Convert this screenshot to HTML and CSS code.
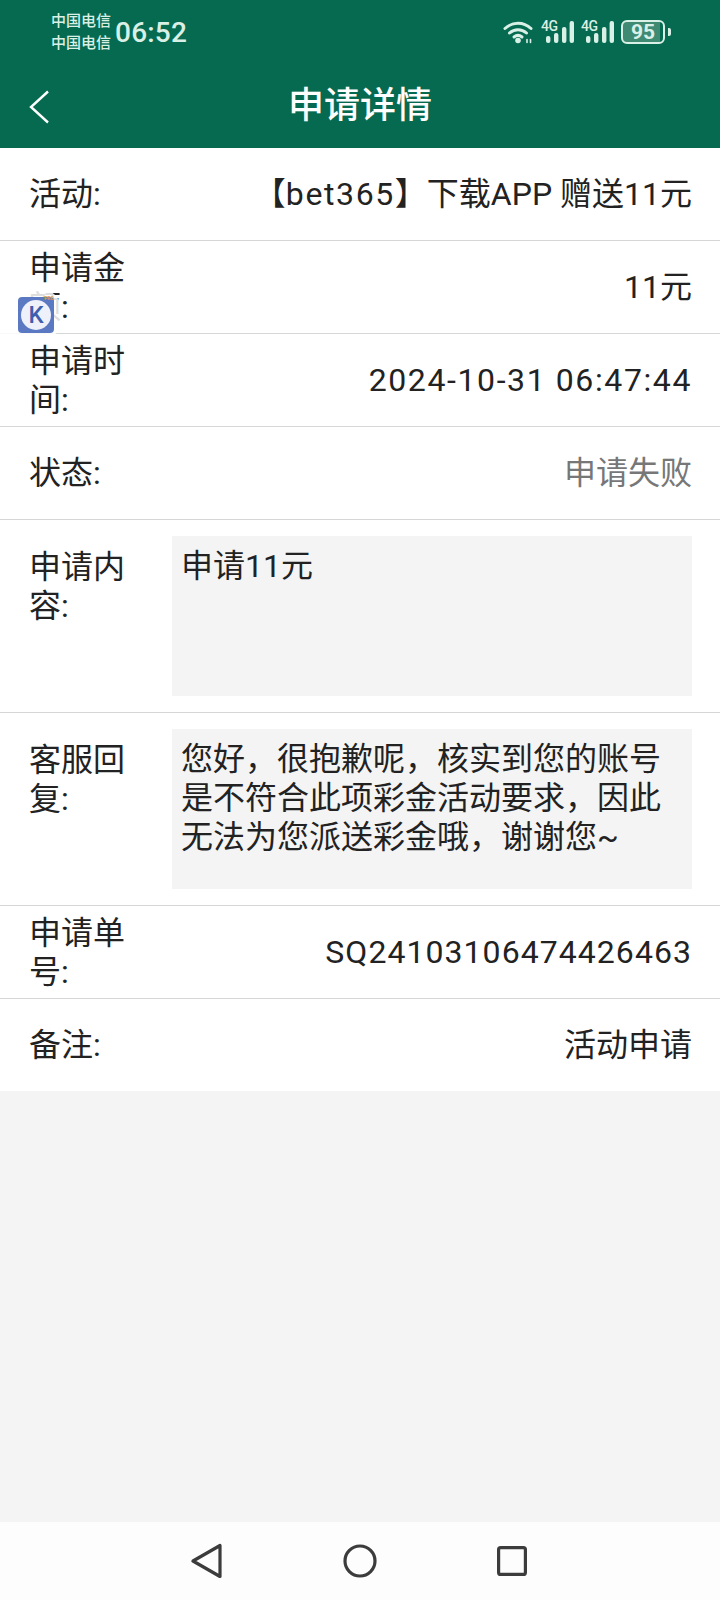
FILE: index.html
```html
<!DOCTYPE html>
<html lang="zh-CN">
<head>
    <meta charset="UTF-8">
    <meta name="viewport" content="width=device-width, initial-scale=1.0">
    <title>申请详情</title>
    <link rel="stylesheet" href="styles.css">
</head>
<body>
    <div class="page">
        <div class="top-bar">
            <div class="status-bar">
                <div class="carrier">
                    <span>中国电信</span>
                    <span>中国电信</span>
                </div>
                <div class="clock">06:52</div>
                <div class="status-icons">
                    <svg class="wifi" width="31" height="24" viewBox="0 0 31 24" fill="none" stroke="#d9f0e7" stroke-width="3" stroke-linecap="round">
                        <path d="M2 8.5C9.5 1.5 20.5 1.5 28 8.5"/>
                        <path d="M6.5 13C11.5 8.5 18.5 8.5 23.5 13"/>
                        <path d="M11 17C13.5 15 16.5 15 19 17"/>
                        <circle cx="15" cy="20.5" r="2.8" fill="#d9f0e7" stroke="none"/>
                        <path d="M24 19.5V22.5M27.5 19.5V22.5" stroke-width="1.6"/>
                    </svg>
                    <div class="signal">
                        <span class="net">4G</span>
                        <svg width="33" height="24" viewBox="0 0 33 24" fill="#d9f0e7">
                            <rect x="5" y="16" width="4.4" height="7" rx="2"/>
                            <rect x="13" y="13" width="4.4" height="10" rx="2"/>
                            <rect x="21" y="7" width="4.4" height="16" rx="2"/>
                            <rect x="28.6" y="1" width="4.4" height="22" rx="2"/>
                        </svg>
                    </div>
                    <div class="signal">
                        <span class="net">4G</span>
                        <svg width="33" height="24" viewBox="0 0 33 24" fill="#d9f0e7">
                            <rect x="5" y="16" width="4.4" height="7" rx="2"/>
                            <rect x="13" y="13" width="4.4" height="10" rx="2"/>
                            <rect x="21" y="7" width="4.4" height="16" rx="2"/>
                            <rect x="28.6" y="1" width="4.4" height="22" rx="2"/>
                        </svg>
                    </div>
                    <div class="battery">
                        <div class="battery-body">95</div>
                        <div class="battery-tip"></div>
                    </div>
                </div>
            </div>
            <div class="nav-title">
                <svg class="back" width="22" height="34" viewBox="0 0 22 34" fill="none" stroke="#fff" stroke-width="2.4">
                    <path d="M19 1.5L2 17L19 32.5"/>
                </svg>
                <h1>申请详情</h1>
            </div>
        </div>

        <div class="detail">
            <div class="row">
                <div class="label">活动:</div>
                <div class="value">【<span class="num-wide">bet365</span>】下载APP 赠送11元</div>
            </div>
            <div class="row">
                <div class="label">申请金额:</div>
                <div class="value">11元</div>
            </div>
            <div class="row">
                <div class="label">申请时间:</div>
                <div class="value num-wide">2024-10-31 06:47:44</div>
            </div>
            <div class="row">
                <div class="label">状态:</div>
                <div class="value muted">申请失败</div>
            </div>
            <div class="row row-text">
                <div class="label">申请内容:</div>
                <div class="text-box">申请11元</div>
            </div>
            <div class="row row-text">
                <div class="label">客服回复:</div>
                <div class="text-box">您好，很抱歉呢，核实到您的账号是不符合此项彩金活动要求，因此无法为您派送彩金哦，谢谢您~</div>
            </div>
            <div class="row">
                <div class="label">申请单号:</div>
                <div class="value num">SQ24103106474426463</div>
            </div>
            <div class="row">
                <div class="label">备注:</div>
                <div class="value">活动申请</div>
            </div>
        </div>

        <div class="spacer"></div>

        <div class="bottom-nav">
            <svg width="32" height="36" viewBox="0 0 32 36" fill="none" stroke="#3c3c3c" stroke-width="3.2" stroke-linejoin="round">
                <path d="M2 18L29 2.5V33.5Z"/>
            </svg>
            <svg width="36" height="36" viewBox="0 0 36 36" fill="none" stroke="#3c3c3c" stroke-width="3.2">
                <circle cx="18" cy="18" r="15"/>
            </svg>
            <svg width="30" height="30" viewBox="0 0 30 30" fill="none" stroke="#3c3c3c" stroke-width="3.2">
                <rect x="1.6" y="1.6" width="26.8" height="26.8" rx="2"/>
            </svg>
        </div>

        <div class="float-ball">
            <div class="app-icon">
                <span class="app-disc">K</span>
                <span class="app-tag">PRO</span>
            </div>
        </div>
    </div>
</body>
</html>
```

FILE: styles.css
```css
* {
    margin: 0;
    padding: 0;
    box-sizing: border-box;
}

body {
    font-family: Roboto, "Noto Sans CJK SC", sans-serif;
    background-color: #f4f4f4;
    color: #222;
}

.page {
    position: relative;
    display: flex;
    flex-direction: column;
    height: 1600px;
    overflow: hidden;
}

.top-bar {
    height: 148px;
    background: #066a50;
}

.status-bar {
    display: flex;
    align-items: center;
    height: 64px;
    padding: 0 49px 0 51px;
    color: #d9f0e7;
}

.carrier {
    display: flex;
    flex-direction: column;
    font-size: 15px;
    font-weight: 500;
    line-height: 22px;
    margin-right: 4px;
}

.clock {
    font-size: 28px;
    font-weight: 500;
    letter-spacing: 0.2px;
}

.status-icons {
    display: flex;
    align-items: center;
    gap: 7px;
    margin-left: auto;
}

.signal {
    position: relative;
    width: 33px;
    height: 24px;
}

.signal .net {
    position: absolute;
    left: 0;
    top: -1px;
    font-size: 14px;
    font-weight: 500;
    letter-spacing: -0.5px;
    line-height: 14px;
}

.battery {
    display: flex;
    align-items: center;
    gap: 3px;
}

.battery-body {
    width: 44px;
    height: 24px;
    border: 2px solid #d9f0e7;
    border-radius: 6px;
    background: linear-gradient(to right, #3f8a73 92%, transparent 92%);
    font-size: 21px;
    font-weight: 700;
    line-height: 20px;
    text-align: center;
}

.battery-tip {
    width: 3px;
    height: 8px;
    border-radius: 0 2px 2px 0;
    background: #d9f0e7;
}

.nav-title {
    position: relative;
    display: flex;
    align-items: center;
    justify-content: center;
    height: 84px;
    color: #fff;
}

.nav-title h1 {
    font-size: 36px;
    font-weight: 500;
    line-height: 44px;
}

.nav-title .back {
    position: absolute;
    left: 29px;
    top: 26px;
}

.detail {
    background: #fff;
}

.row {
    display: flex;
    align-items: center;
    justify-content: space-between;
    min-height: 93px;
    padding: 1px 28px 0 29px;
    border-bottom: 1px solid #d6d6d6;
    font-size: 32px;
    line-height: 39px;
}

.row:last-child {
    min-height: 92px;
    border-bottom: none;
}

.row-text {
    align-items: flex-start;
    height: 193px;
    padding-top: 16px;
}

.label {
    flex: none;
    width: 96px;
}

.row-text .label {
    padding-top: 12px;
}

.value {
    text-align: right;
}

.num {
    letter-spacing: 1.05px;
}

.num-wide {
    letter-spacing: 1.6px;
}

.muted {
    color: #777;
}

.text-box {
    width: 520px;
    height: 160px;
    padding: 11px 9px 0;
    background: #f4f4f4;
}

.spacer {
    flex: 1;
}

.bottom-nav {
    display: flex;
    align-items: center;
    justify-content: center;
    gap: 119px;
    height: 78px;
    padding-right: 2px;
    background: #fdfdfd;
}

.float-ball {
    position: absolute;
    left: 0;
    top: 286px;
    display: flex;
    align-items: center;
    width: 63px;
    height: 58px;
    padding-left: 18px;
    border-radius: 0 29px 29px 0;
    background: rgba(255, 255, 255, 0.85);
}

.app-icon {
    position: relative;
    display: flex;
    align-items: center;
    justify-content: center;
    width: 36px;
    height: 36px;
    border-radius: 4px;
    background: #5b79c2;
}

.app-disc {
    width: 30px;
    height: 30px;
    border-radius: 50%;
    background: #eef1fa;
    color: #3f5fae;
    font-size: 24px;
    font-weight: 500;
    line-height: 30px;
    text-align: center;
}

.app-tag {
    position: absolute;
    top: -2px;
    right: 0;
    color: #e09a4a;
    font-size: 5px;
    font-weight: 700;
}
```
